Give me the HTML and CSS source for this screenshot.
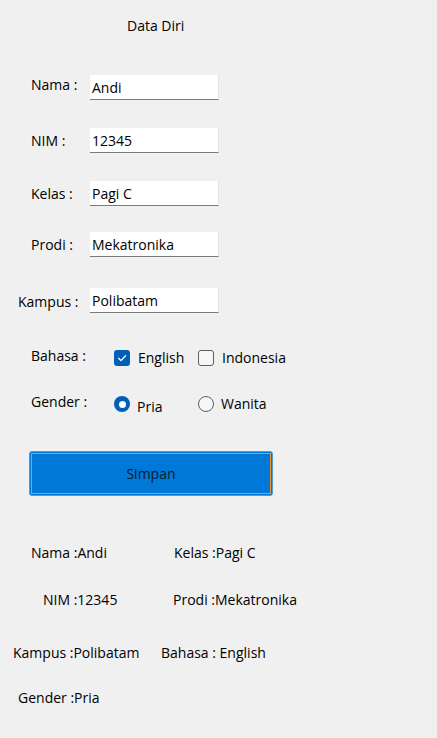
FILE: index.html
```html
<!DOCTYPE html>
<html>
<head>
<meta charset="utf-8">
<link rel="stylesheet" href="styles.css">
</head>
<body>
<div class="app">
  <div class="title">Data Diri</div>

  <div class="fields">
    <div class="field">
      <span class="label">Nama :</span>
      <div class="textbox">Andi</div>
    </div>
    <div class="field gap-a">
      <span class="label low">NIM :</span>
      <div class="textbox">12345</div>
    </div>
    <div class="field gap-a">
      <span class="label low">Kelas :</span>
      <div class="textbox">Pagi C</div>
    </div>
    <div class="field gap-b">
      <span class="label low">Prodi :</span>
      <div class="textbox">Mekatronika</div>
    </div>
    <div class="field gap-c">
      <span class="label lower wide">Kampus :</span>
      <div class="textbox">Polibatam</div>
    </div>
  </div>

  <div class="choice-row bahasa">
    <span class="choice-label">Bahasa :</span>
    <div class="option">
      <span class="check checked">
        <svg width="16" height="16" viewBox="0 0 16 16"><path d="M4.6 8.3 L7 10.6 L11.6 5.8" fill="none" stroke="#fff" stroke-width="1.3" stroke-linecap="round" stroke-linejoin="round"/></svg>
      </span>
      <span class="opt-text">English</span>
    </div>
    <div class="option">
      <span class="check"></span>
      <span class="opt-text">Indonesia</span>
    </div>
  </div>

  <div class="choice-row gender">
    <span class="choice-label">Gender :</span>
    <div class="option">
      <span class="radio checked"><span class="dot"></span></span>
      <span class="opt-text r-text pria">Pria</span>
    </div>
    <div class="option">
      <span class="radio"></span>
      <span class="opt-text r-text">Wanita</span>
    </div>
  </div>

  <div class="button-wrap">
    <button class="btn"><span class="btn-focus">Simpan</span></button>
  </div>

  <div class="out-row r1">
    <span class="out-a">Nama :Andi</span>
    <span class="out-b">Kelas :Pagi C</span>
  </div>
  <div class="out-row r2">
    <span class="out-a">NIM :12345</span>
    <span class="out-b">Prodi :Mekatronika</span>
  </div>
  <div class="out-row r3">
    <span class="out-a">Kampus :Polibatam</span>
    <span class="out-b">Bahasa : English</span>
  </div>
  <div class="out-row r4">
    <span class="out-a">Gender :Pria</span>
  </div>
</div>
</body>
</html>
```

FILE: styles.css
```css
* { box-sizing: border-box; }

html, body {
  margin: 0;
  padding: 0;
  background: #f0f0f0;
}

body {
  font-family: "Open Sans", "Noto Sans", "Liberation Sans", sans-serif;
  font-size: 14px;
  line-height: 19px;
  color: #000;
}

.app {
  width: 437px;
  height: 738px;
  padding-top: 16px;
  overflow: hidden;
}

.title {
  height: 19px;
  padding-left: 127px;
}

/* text fields */
.fields {
  margin-top: 40px;
  display: flex;
  flex-direction: column;
}

.field {
  display: flex;
  align-items: flex-start;
  height: 25px;
}

.gap-a { margin-top: 28px; }
.gap-b { margin-top: 26px; }
.gap-c { margin-top: 31px; }

.label {
  width: 90px;
  padding-left: 31px;
  margin-top: 0;
  white-space: nowrap;
}
.label.low { margin-top: 3px; }
.label.lower { margin-top: 4px; }
.label.wide { padding-left: 18px; }

.textbox {
  width: 129px;
  height: 25px;
  background: #fff;
  border-bottom: 1px solid #7a7a7a;
  border-right: 1px solid #e3e3e3;
  padding: 3px 0 0 2px;
  line-height: 19px;
}

/* choices */
.choice-row {
  display: flex;
  align-items: flex-start;
  height: 20px;
}
.bahasa { margin-top: 33px; }
.gender { margin-top: 26px; }

.choice-label {
  width: 114px;
  padding-left: 31px;
  white-space: nowrap;
}

.option {
  width: 84px;
  display: flex;
  align-items: flex-start;
  gap: 8px;
}

.check {
  display: block;
  flex: none;
  width: 16px;
  height: 16px;
  margin-top: 4px;
  border: 1px solid #5f5f5f;
  border-radius: 3px;
  background: #f6f6f6;
}
.check.checked {
  border: none;
  background: #005fb8;
}
.check svg { display: block; }

.opt-text {
  margin-top: 2px;
  white-space: nowrap;
}

.radio {
  display: flex;
  align-items: center;
  justify-content: center;
  flex: none;
  width: 16px;
  height: 16px;
  margin-top: 4px;
  border: 1px solid #5f5f5f;
  border-radius: 50%;
  background: #f6f6f6;
}
.radio.checked {
  border: none;
  background: #005fb8;
}
.dot {
  width: 7px;
  height: 7px;
  border-radius: 50%;
  background: #fff;
}
.gender .option { gap: 7px; }
.r-text { margin-top: 2px; }
.r-text.pria { margin-top: 5px; }

/* button */
.button-wrap {
  margin-top: 39px;
  padding-left: 29px;
}

.btn {
  display: block;
  width: 244px;
  height: 45px;
  padding: 1px;
  margin: 0;
  border: 1px solid #4a9be0;
  border-radius: 3px;
  background: #0078d7;
  font: inherit;
  color: #0a1a2a;
}
.btn-focus {
  display: flex;
  align-items: center;
  justify-content: center;
  width: 100%;
  height: 100%;
  border: 1px dotted #000;
  outline: 1px solid #e8912f;
  outline-offset: -1px;
}

/* output */
.out-row {
  display: flex;
  height: 19px;
  white-space: nowrap;
}
.r1 { margin-top: 47px; }
.r2 { margin-top: 28px; }
.r3 { margin-top: 34px; }
.r4 { margin-top: 26px; }

.r1 .out-a { padding-left: 31px; width: 174px; }
.r2 .out-a { padding-left: 43px; width: 173px; }
.r3 .out-a { padding-left: 13px; width: 161px; }
.r4 .out-a { padding-left: 18px; }
```
